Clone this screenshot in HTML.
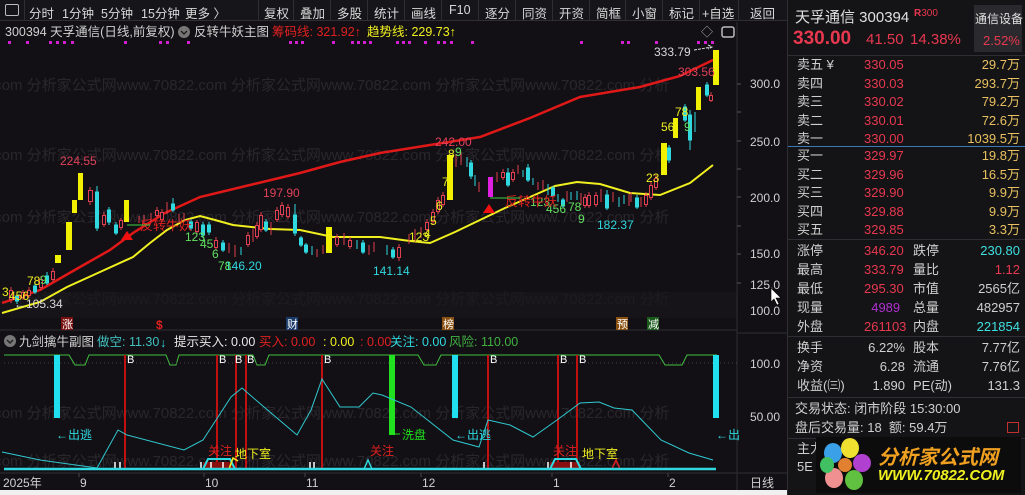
<!DOCTYPE html>
<html><head><meta charset="utf-8"><style>
*{margin:0;padding:0;box-sizing:border-box}
body{width:1025px;height:495px;background:#121014;overflow:hidden;position:relative;font-family:"Liberation Sans","Noto Sans CJK SC",sans-serif;color:#d0d0d0}
.tb{position:absolute;left:0;top:0;width:787px;height:21px;background:#16151a;border-bottom:1px solid #2e2e34;font-size:12.5px;color:#d8d8d8}
.tb span{position:absolute;top:3px}
.tb i{position:absolute;top:0;width:1px;height:21px;background:#2e2e34}
.p{position:absolute;left:787px;top:0;width:238px;height:495px;background:#141316;border-left:1px solid #2e2e34;font-size:13px}
.p div{position:absolute;white-space:nowrap}
.r{color:#e8384f}.y{color:#e8c060}.c{color:#3fe0e0}.w{color:#d0d0d0}.m{color:#b030d0}
.hl{position:absolute;left:0;width:238px;height:1px;background:#2e2e34}
</style></head><body>
<div class="tb">
<span style="left:5px;top:4px;width:14px;height:12px;border:1.5px solid #bbb;border-radius:2px"></span>
<i style="left:24px"></i>
<span style="left:29px">分时</span><span style="left:62px">1分钟</span><span style="left:101px">5分钟</span><span style="left:141px">15分钟</span><span style="left:185px">更多 〉</span>
<i style="left:258px"></i><span style="left:264px">复权</span><i style="left:293px"></i><span style="left:300px">叠加</span><i style="left:330px"></i><span style="left:337px">多股</span><i style="left:367px"></i><span style="left:374px">统计</span><i style="left:404px"></i><span style="left:411px">画线</span><i style="left:441px"></i><span style="left:449px">F10</span><i style="left:478px"></i><span style="left:485px">逐分</span><i style="left:515px"></i><span style="left:522px">同资</span><i style="left:552px"></i><span style="left:559px">开资</span><i style="left:589px"></i><span style="left:596px">简框</span><i style="left:625px"></i><span style="left:632px">小窗</span><i style="left:662px"></i><span style="left:669px">标记</span><i style="left:699px"></i><span style="left:702px">+自选</span><i style="left:738px"></i><span style="left:750px">返回</span>
</div>

<svg style="position:absolute;left:0;top:0" width="787" height="495" font-family="Liberation Sans,Noto Sans CJK SC,sans-serif">
<g fill="#29272c" font-size="15">
<text x="-10" y="90">.com 分析家公式网www.70822.com 分析家公式网www.70822.com 分析家公式网www.70822.com 分析</text>
<text x="-10" y="160">.com 分析家公式网www.70822.com 分析家公式网www.70822.com 分析家公式网www.70822.com 分析</text>
<text x="-10" y="222">.com 分析家公式网www.70822.com 分析家公式网www.70822.com 分析家公式网www.70822.com 分析</text>
<text x="-10" y="304">.com 分析家公式网www.70822.com 分析家公式网www.70822.com 分析家公式网www.70822.com 分析</text>
<text x="-10" y="418">.com 分析家公式网www.70822.com 分析家公式网www.70822.com 分析家公式网www.70822.com 分析</text>
<text x="-10" y="466">.com 分析家公式网www.70822.com 分析家公式网www.70822.com 分析家公式网www.70822.com 分析</text>
</g>
<rect x="0" y="292" width="737" height="26" fill="#18171b" opacity="0.7"/>
<text x="5" y="36" font-size="12.5" fill="#d0d0d0">300394 天孚通信(日线,前复权)</text>
<circle cx="184" cy="32" r="6" fill="#777"/><path d="M181 31l3 3 3-3" stroke="#222" fill="none" stroke-width="1.5"/>
<text x="194" y="36" font-size="12.5" fill="#d0d0d0">反转牛妖主图</text>
<text x="272" y="36" font-size="12.5" fill="#e02020">筹码线: 321.92↑</text>
<text x="367" y="36" font-size="12.5" fill="#f0f020">趋势线: 229.73↑</text>
<text x="701" y="36" font-size="12" fill="#aaa">◇</text>
<rect x="722" y="27" width="12" height="10" rx="2" fill="none" stroke="#bbb" stroke-width="1.5"/>
<g fill="#d020d0">
<rect x="8" y="41" width="3" height="3"/><rect x="26" y="41" width="3" height="3"/><rect x="49" y="41" width="3" height="3"/><rect x="56" y="41" width="3" height="3"/><rect x="63" y="41" width="3" height="3"/><rect x="71" y="41" width="3" height="3"/><rect x="124" y="41" width="3" height="3"/><rect x="159" y="41" width="3" height="3"/><rect x="166" y="41" width="3" height="3"/><rect x="187" y="41" width="3" height="3"/><rect x="289" y="41" width="3" height="3"/><rect x="295" y="41" width="3" height="3"/><rect x="301" y="41" width="3" height="3"/><rect x="332" y="41" width="3" height="3"/><rect x="351" y="41" width="3" height="3"/><rect x="357" y="41" width="3" height="3"/><rect x="363" y="41" width="3" height="3"/><rect x="369" y="41" width="3" height="3"/><rect x="396" y="41" width="3" height="3"/><rect x="402" y="41" width="3" height="3"/><rect x="408" y="41" width="3" height="3"/><rect x="424" y="41" width="3" height="3"/><rect x="437" y="41" width="3" height="3"/><rect x="443" y="41" width="3" height="3"/><rect x="450" y="41" width="3" height="3"/><rect x="471" y="41" width="3" height="3"/><rect x="580" y="41" width="3" height="3"/><rect x="621" y="41" width="3" height="3"/><rect x="627" y="41" width="3" height="3"/><rect x="655" y="41" width="3" height="3"/><rect x="697" y="41" width="3" height="3"/><rect x="704" y="41" width="3" height="3"/><rect x="711" y="41" width="3" height="3"/>
</g>
<line x1="737" y1="22" x2="737" y2="490" stroke="#2e2e34"/>
<g fill="#d0d0d0" font-size="12">
<text x="750" y="88">300.0</text><text x="750" y="146">250.0</text><text x="750" y="202">200.0</text><text x="750" y="258">150.0</text><text x="750" y="289">125.0</text><text x="750" y="315">100.0</text>
<text x="750" y="368">100.0</text><text x="750" y="421">50.00</text>
</g>
<g stroke="#555"><line x1="737" y1="84" x2="741" y2="84"/><line x1="737" y1="112" x2="741" y2="112"/><line x1="737" y1="141" x2="741" y2="141"/><line x1="737" y1="169" x2="741" y2="169"/><line x1="737" y1="197" x2="741" y2="197"/><line x1="737" y1="226" x2="741" y2="226"/><line x1="737" y1="254" x2="741" y2="254"/><line x1="737" y1="283" x2="741" y2="283"/></g>
<path d="M771 288l0 14 3-3 3 6 2-1-3-6 5 0z" fill="#fff" stroke="#000" stroke-width=".6"/>
<polyline fill="none" stroke="#e01818" stroke-width="2.5" points="2,303 40,290 80,267 110,250 133,233 165,213 200,197 250,185 300,173 340,162 380,153 430,145 480,137 530,118 580,97 640,87 680,76 713,60"/>
<polyline fill="none" stroke="#f0f020" stroke-width="2" points="2,313 40,302 67,287 100,272 133,257 150,243 167,230 185,220 200,216 215,220 233,225 270,229 300,230 333,237 380,237 410,241 430,243 455,232 480,220 505,208 530,197 555,186 577,182 600,184 630,193 660,195 690,183 713,165"/>
<g fill="#f0f000">
<rect x="55" y="255" width="6" height="8"/><rect x="66" y="222" width="6" height="28"/><rect x="72" y="200" width="5" height="13"/><rect x="78" y="173" width="5" height="27"/><rect x="124" y="200" width="5" height="22"/><rect x="326" y="227" width="6" height="26"/><rect x="447" y="155" width="6" height="45"/><rect x="661" y="143" width="6" height="32"/><rect x="673" y="118" width="5" height="20"/><rect x="696" y="87" width="5" height="23"/><rect x="713" y="50" width="6" height="35"/>
</g>
<rect x="488" y="177" width="5" height="20" fill="#e020e0"/>
<g stroke-width="1">
<g stroke="#e04050" fill="none">
<path d="M11 287v16M23 290v10M29 287v11M41 276v14M53 268v14M90 187v18M104 212v15M121 218v12M139 216v7M144 215v9M151 213v9M157 207v11M162 209v13M167 202v12M179 214v9M184 213v9M197 220v14M216 237v13M229 243v10M235 245v12M248 232v15M253 229v13M257 222v17M261 212v20M271 222v13M277 207v15M282 202v15M288 204v15M317 249v8M323 245v9M337 234v13M344 233v12M350 237v12M369 245v10M374 242v10M399 244v17M409 234v10M415 229v13M421 227v11M427 219v13M433 209v15M438 197v17M443 192v15M456 154v13M461 152v13M479 182v10M497 172v10M503 169v11M513 169v13M518 165v9M538 182v8M543 180v10M567 191v11M581 193v12M585 194v14M589 192v16M596 192v15M601 189v13M613 192v10M629 194v12M631 192v10M641 197v10M646 192v15M651 182v18M656 175v15M711 92v10"/>
</g>
<g fill="#12101a" stroke="#e04050">
<rect x="9.5" y="290.5" width="3" height="9"/><rect x="21.5" y="292.5" width="3" height="5"/><rect x="27.5" y="290.5" width="3" height="5"/><rect x="39.5" y="279.5" width="3" height="8"/><rect x="51.5" y="271.5" width="3" height="8"/><rect x="88.5" y="190.5" width="4" height="11"/><rect x="102.5" y="215.5" width="3" height="9"/><rect x="119.5" y="220.5" width="3" height="7"/><rect x="155.5" y="210.5" width="3" height="5"/><rect x="160.5" y="212.5" width="3" height="7"/><rect x="195.5" y="222.5" width="3" height="9"/><rect x="214.5" y="240.5" width="3" height="7"/><rect x="246.5" y="235.5" width="3" height="9"/><rect x="255.5" y="225.5" width="3" height="11"/><rect x="259.5" y="215.5" width="3" height="14"/><rect x="275.5" y="210.5" width="3" height="9"/><rect x="280.5" y="205.5" width="3" height="9"/><rect x="286.5" y="207.5" width="3" height="9"/><rect x="335.5" y="237.5" width="3" height="7"/><rect x="348.5" y="240.5" width="3" height="6"/><rect x="397.5" y="247.5" width="3" height="10"/><rect x="425.5" y="222.5" width="3" height="7"/><rect x="431.5" y="212.5" width="3" height="9"/><rect x="436.5" y="200.5" width="3" height="11"/><rect x="441.5" y="195.5" width="3" height="9"/><rect x="501.5" y="172.5" width="3" height="5"/><rect x="511.5" y="172.5" width="3" height="7"/><rect x="583.5" y="197.5" width="3" height="8"/><rect x="587.5" y="195.5" width="3" height="10"/><rect x="594.5" y="195.5" width="3" height="9"/><rect x="644.5" y="195.5" width="3" height="9"/><rect x="649.5" y="185.5" width="3" height="12"/><rect x="654.5" y="178.5" width="3" height="9"/><rect x="709.5" y="95.5" width="3" height="5"/>
</g>
<g stroke="#30d8e0" fill="#30d8e0">
<path d="M17 294v10M35 283v11M47 272v13M97 186v45M109 207v18M116 222v13M173 198v14M191 219v12M203 222v16M209 222v13M223 240v12M241 247v8M266 219v13M295 204v32M301 236v11M306 243v11M312 246v9M357 240v9M363 240v14M387 245v10M393 247v12M467 157v10M471 160v19M475 175v11M508 168v19M523 170v7M528 164v18M533 178v7M548 184v11M553 186v12M558 194v8M563 198v10M571 192v8M577 191v9M607 190v20M619 197v10M624 195v9M637 195v14M669 145v18M685 104v18M690 110v40M695 112v20M707 82v15"/>
<rect x="15.5" y="296" width="3" height="5"/><rect x="33.5" y="286" width="3" height="6"/><rect x="45.5" y="276" width="3" height="7"/><rect x="95.5" y="192" width="3" height="36"/><rect x="107.5" y="210" width="3" height="12"/><rect x="114.5" y="225" width="3" height="8"/><rect x="171.5" y="204" width="3" height="6"/><rect x="189.5" y="222" width="3" height="6"/><rect x="201.5" y="225" width="3" height="10"/><rect x="207.5" y="225" width="3" height="7"/><rect x="221.5" y="243" width="3" height="7"/><rect x="264.5" y="222" width="3" height="8"/><rect x="293.5" y="215" width="3" height="18"/><rect x="299.5" y="238" width="3" height="7"/><rect x="304.5" y="245" width="3" height="7"/><rect x="361.5" y="243" width="3" height="9"/><rect x="391.5" y="250" width="3" height="7"/><rect x="469.5" y="163" width="3" height="13"/><rect x="506.5" y="173" width="3" height="12"/><rect x="526.5" y="168" width="3" height="12"/><rect x="551.5" y="188" width="3" height="8"/><rect x="561.5" y="200" width="3" height="6"/><rect x="605.5" y="195" width="3" height="13"/><rect x="635.5" y="198" width="3" height="9"/><rect x="667.5" y="148" width="3" height="12"/><rect x="683.5" y="107" width="3" height="13"/><rect x="688.5" y="115" width="3" height="25"/><rect x="705.5" y="85" width="3" height="10"/>
</g>
</g>
<g font-size="12">
<text x="60" y="165" fill="#e0405a">224.55</text>
<text x="263" y="197" fill="#e0405a">197.90</text>
<text x="435" y="146" fill="#e0405a">242.00</text>
<text x="678" y="76" fill="#e0405a">303.56</text>
<text x="654" y="56" fill="#d8d8d8">333.79</text>
<text x="373" y="275" fill="#30d8e0">141.14</text>
<text x="225" y="270" fill="#30d8e0">146.20</text>
<text x="597" y="229" fill="#30d8e0">182.37</text>
<text x="14" y="308" fill="#d8d8d8">←105.34</text>
<text x="2" y="296" fill="#f0f020">3</text><text x="9" y="300" fill="#f0f020">456</text>
<text x="27" y="285" fill="#f0f020">78</text><text x="40" y="284" fill="#60e060">9</text>
<text x="185" y="241" fill="#60e060">123</text><text x="200" y="248" fill="#60e060">45</text><text x="212" y="258" fill="#60e060">6</text><text x="218" y="270" fill="#60e060">78</text>
<text x="409" y="241" fill="#f0f020">123</text><text x="424" y="238" fill="#f0f020">4</text><text x="430" y="225" fill="#f0f020">5</text><text x="436" y="210" fill="#f0f020">6</text><text x="442" y="186" fill="#f0f020">7</text><text x="448" y="158" fill="#f0f020">8</text><text x="455" y="156" fill="#60e060">9</text>
<text x="530" y="206" fill="#60e060">123</text><text x="546" y="213" fill="#60e060">456</text><text x="568" y="211" fill="#60e060">78</text><text x="578" y="223" fill="#60e060">9</text>
<text x="646" y="182" fill="#f0f020">23</text><text x="661" y="131" fill="#f0f020">56</text><text x="675" y="116" fill="#f0f020">78</text><text x="684" y="131" fill="#60e060">9</text>
<text x="140" y="230" fill="#e02020" font-size="13">反转牛妖</text>
<text x="505" y="206" fill="#e02020" font-size="13">反转牛妖</text>
</g>
<path d="M121 240l6-9 6 9z" fill="#f01010"/><path d="M483 213l6-9 6 9z" fill="#f01010"/>
<line x1="127" y1="225" x2="150" y2="225" stroke="#40d040"/><line x1="490" y1="198" x2="520" y2="198" stroke="#40d040"/>
<path d="M694 50l18-3m-4-2l4 2-4 2" stroke="#ddd" fill="none" stroke-dasharray="3 1"/>
<line x1="0" y1="330" x2="737" y2="330" stroke="#2e2e34"/>
<rect x="61" y="317" width="12" height="13" fill="#7a1010"/><text x="62" y="328" font-size="11" fill="#fff">涨</text>
<text x="156" y="329" font-size="12" fill="#e02020" font-weight="bold">$</text>
<rect x="286" y="317" width="12" height="13" fill="#1a3a6a"/><text x="287" y="328" font-size="11" fill="#fff">财</text>
<rect x="442" y="317" width="12" height="13" fill="#8a5010"/><text x="443" y="328" font-size="11" fill="#fff">榜</text>
<rect x="616" y="317" width="12" height="13" fill="#8a5010"/><text x="617" y="328" font-size="11" fill="#fff">预</text>
<rect x="647" y="317" width="12" height="13" fill="#1a5a1a"/><text x="648" y="328" font-size="11" fill="#fff">减</text>
<circle cx="10" cy="341" r="6" fill="#777"/><path d="M7 340l3 3 3-3" stroke="#222" fill="none" stroke-width="1.5"/>
<g font-size="12.5">
<text x="19" y="346" fill="#d0d0d0">九剑擒牛副图</text>
<text x="97" y="346" fill="#40c0c0">做空: 11.30</text><text x="160" y="347" fill="#30d8e0">↓</text>
<text x="174" y="346" fill="#e8e8e8">提示买入: 0.00</text>
<text x="259" y="346" fill="#e02020">买入: 0.00</text>
<text x="323" y="346" fill="#f0f020">: 0.00</text>
<text x="360" y="346" fill="#e02020">: 0.00</text>
<text x="390" y="346" fill="#30d8e0">关注: 0.00</text>
<text x="449" y="346" fill="#40b040">风险: 110.00</text>
</g>
<polyline fill="none" stroke="#40c040" points="4,355 69,355 75,365 85,365 89,355 166,355 170,365 176,365 179,355 253,355 257,365 265,365 269,355 418,355 424,365 436,365 441,355 659,355 665,365 682,365 687,355 717,355"/>
<line x1="4" y1="363" x2="737" y2="363" stroke="#444" stroke-dasharray="1 3"/>
<g fill="#20e0f0"><rect x="54" y="355" width="6" height="63"/><rect x="452" y="355" width="6" height="63"/><rect x="713" y="355" width="6" height="63"/></g>
<rect x="389" y="355" width="6" height="80" fill="#20e020"/><line x1="395" y1="434" x2="400" y2="434" stroke="#20e020"/>
<g stroke="#c01010" stroke-width="2"><path d="M125 355v113M217 355v113M236 355v113M246 355v113M322 355v113M488 355v113M558 355v113M577 355v113"/></g>
<g font-size="11" fill="#fff"><text x="127" y="363">B</text><text x="219" y="363">B</text><text x="235" y="363">B</text><text x="247" y="363">B</text><text x="324" y="363">B</text><text x="490" y="363">B</text><text x="560" y="363">B</text><text x="579" y="363">B</text></g>
<polyline fill="none" stroke="#30c8d0" stroke-width="1" points="2,452 40,460 97,468 118,430 127,435 184,450 203,440 231,397 242,388 264,407 297,435 311,410 322,379 340,407 359,407 373,393 382,395 411,407 453,440 479,447 488,420 510,425 533,437 557,420 580,403 599,402 614,408 632,410 661,440 689,453 713,460"/>
<g font-size="12">
<text x="56" y="439" fill="#30d8e0">←出逃</text><text x="455" y="439" fill="#30d8e0">←出逃</text><text x="716" y="439" fill="#30d8e0">←出</text>
<text x="402" y="439" fill="#20e020">洗盘</text>
<text x="208" y="455" fill="#e02020">关注</text><text x="370" y="455" fill="#e02020">关注</text><text x="553" y="455" fill="#e02020">关注</text>
<text x="235" y="458" fill="#f0f020">地下室</text><text x="582" y="458" fill="#f0f020">地下室</text>
</g>
<rect x="203" y="462" width="30" height="7" fill="#8a1010"/><rect x="550" y="462" width="30" height="7" fill="#8a1010"/>
<polyline fill="none" stroke="#30d8e0" stroke-width="2" points="203,469 208,459 230,459 235,469"/>
<polyline fill="none" stroke="#30d8e0" stroke-width="2" points="550,469 555,459 576,459 581,469"/>
<polyline fill="none" stroke="#30d8e0" stroke-width="1.5" points="364,469 368,460 372,469"/>
<polyline fill="none" stroke="#e02020" stroke-width="1.5" points="612,469 616,460 620,469"/>
<polyline fill="none" stroke="#f0f020" stroke-width="1.5" points="229,469 233,458 238,461"/>
<g stroke="#fff" stroke-width="1.5"><path d="M115 462v7M120 462v7M201 462v7M211 462v7M223 462v7M310 462v7M314 462v7M484 462v7M548 462v7M571 462v7"/></g>
<line x1="4" y1="469" x2="716" y2="469" stroke="#30d8e0" stroke-width="2.5"/>
<line x1="0" y1="473" x2="787" y2="473" stroke="#2e2e34"/>
<line x1="737" y1="333" x2="787" y2="333" stroke="#2e2e34"/>
<g stroke="#444"><path d="M79 473v4M204 473v4M305 473v4M421 473v4M552 473v4M668 473v4"/></g>
<g font-size="12" fill="#d0d0d0"><text x="3" y="487">2025年</text><text x="80" y="487">9</text><text x="205" y="487">10</text><text x="306" y="487">11</text><text x="422" y="487">12</text><text x="553" y="487">1</text><text x="669" y="487">2</text><text x="750" y="487">日线</text></g>
<rect x="0" y="490" width="787" height="5" fill="#f0f0f0"/>
</svg>

<div class="p">
<div style="left:7px;top:6px;font-size:15px;color:#e0e0e0">天孚通信 300394</div>
<div style="left:126px;top:8px;font-size:10px" class="r"><b>R</b>300</div>
<div style="left:186px;top:5px;width:48px;height:47px;background:#2a2a2e"></div>
<div style="left:187px;top:10px;font-size:12px;color:#e0e0e0">通信设备</div>
<div style="left:195px;top:33px;font-size:13px" class="r">2.52%</div>
<div style="left:5px;top:28px;font-size:19px;font-weight:bold" class="r">330.00</div>
<div style="left:78px;top:31px;font-size:15px" class="r">41.50</div>
<div style="left:122px;top:31px;font-size:15px" class="r">14.38%</div>
<div class="hl" style="top:55px"></div>
<div style="left:9px;top:56px;line-height:18.5px">卖五 ¥<br>卖四<br>卖三<br>卖二<br>卖一</div>
<div class="r" style="left:76px;top:56px;line-height:18.5px">330.05<br>330.03<br>330.02<br>330.01<br>330.00</div>
<div class="y" style="right:5px;top:56px;line-height:18.5px;text-align:right">29.7万<br>293.7万<br>79.2万<br>72.6万<br>1039.5万</div>
<div style="left:0;top:146px;width:238px;height:1px;background:#3a78b8"></div>
<div style="left:9px;top:147px;line-height:18.5px">买一<br>买二<br>买三<br>买四<br>买五</div>
<div class="r" style="left:76px;top:147px;line-height:18.5px">329.97<br>329.96<br>329.90<br>329.88<br>329.85</div>
<div class="y" style="right:5px;top:147px;line-height:18.5px;text-align:right">19.8万<br>16.5万<br>9.9万<br>9.9万<br>3.3万</div>
<div class="hl" style="top:239px"></div>
<div style="left:9px;top:241px;line-height:19px">涨停<br>最高<br>最低<br>现量<br>外盘</div>
<div style="left:76px;top:241px;line-height:19px"><span class="r">346.20</span><br><span class="r">333.79</span><br><span class="r">295.30</span><br><span class="m">&nbsp;&nbsp;4989</span><br><span class="r">261103</span></div>
<div style="left:125px;top:241px;line-height:19px">跌停<br>量比<br>市值<br>总量<br>内盘</div>
<div style="right:5px;top:241px;line-height:19px;text-align:right"><span class="c">230.80</span><br><span class="r">1.12</span><br>2565亿<br>482957<br><span class="c">221854</span></div>
<div class="hl" style="top:336px"></div>
<div style="left:9px;top:338px;line-height:19px">换手<br>净资<br>收益(㈢)</div>
<div style="left:60px;top:338px;line-height:19px;width:57px;text-align:right">6.22%<br>6.28<br>1.890</div>
<div style="left:125px;top:338px;line-height:19px">股本<br>流通<br>PE(动)</div>
<div style="right:5px;top:338px;line-height:19px;text-align:right">7.77亿<br>7.76亿<br>131.3</div>
<div class="hl" style="top:397px"></div>
<div style="left:7px;top:399px;line-height:19px">交易状态: 闭市阶段 15:30:00<br>盘后交易量: 18&nbsp; 额: 59.4万</div>
<div style="left:219px;top:422px;width:12px;height:11px;border:1px solid #c03030"></div>
<div class="hl" style="top:438px"></div>
<div style="left:9px;top:440px;line-height:18px">主力<br>5E</div>
<div style="left:28px;top:437px;width:205px;height:56px;background:#0c0c0c"></div>
<svg style="position:absolute;left:30px;top:438px" width="55" height="55">
<ellipse cx="15" cy="15" rx="9" ry="10" fill="#3aa0e8"/><ellipse cx="32" cy="10" rx="9" ry="10" fill="#f0e030"/><ellipse cx="44" cy="25" rx="9" ry="9" fill="#b040d0"/><ellipse cx="36" cy="42" rx="9" ry="10" fill="#60c040"/><ellipse cx="16" cy="40" rx="9" ry="10" fill="#f09090"/><ellipse cx="9" cy="27" rx="7" ry="8" fill="#40c060"/><circle cx="27" cy="27" r="7" fill="#e08030"/>
</svg>
<div style="left:90px;top:441px;font-size:20px;font-weight:bold;font-style:italic;color:#f0a020">分析家公式网</div>
<div style="left:90px;top:467px;font-size:15px;font-weight:bold;font-style:italic;color:#f0f020;font-family:'Liberation Sans',sans-serif">WWW.70822.COM</div>
</div>
</body></html>
